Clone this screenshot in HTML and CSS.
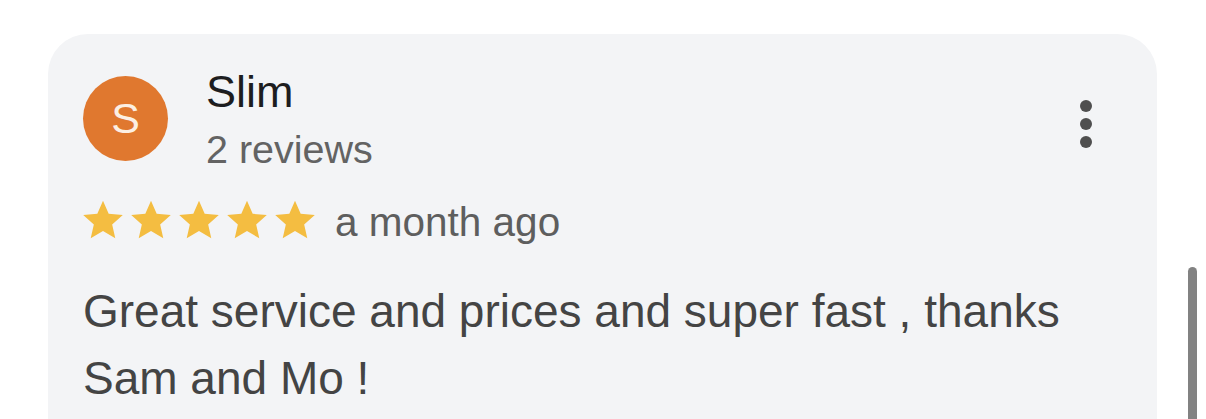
FILE: index.html
```html
<!DOCTYPE html>
<html>
<head>
<meta charset="utf-8">
<link rel="stylesheet" href="styles.css">
</head>
<body>
<div class="page">
  <div class="card">
    <div class="header">
      <div class="avatar">S</div>
      <div class="who">
        <div class="name">Slim</div>
        <div class="count">2 reviews</div>
      </div>
      <div class="menu" aria-label="More options">
        <span class="dot"></span><span class="dot"></span><span class="dot"></span>
      </div>
    </div>
    <div class="meta">
      <div class="stars">
        <svg class="star" viewBox="0 0 24 24"><path d="M12 1.5l3.1 7.1 7.7.7-5.8 5.1 1.7 7.6L12 18l-6.7 4 1.7-7.6-5.8-5.1 7.7-.7z"/></svg>
        <svg class="star" viewBox="0 0 24 24"><path d="M12 1.5l3.1 7.1 7.7.7-5.8 5.1 1.7 7.6L12 18l-6.7 4 1.7-7.6-5.8-5.1 7.7-.7z"/></svg>
        <svg class="star" viewBox="0 0 24 24"><path d="M12 1.5l3.1 7.1 7.7.7-5.8 5.1 1.7 7.6L12 18l-6.7 4 1.7-7.6-5.8-5.1 7.7-.7z"/></svg>
        <svg class="star" viewBox="0 0 24 24"><path d="M12 1.5l3.1 7.1 7.7.7-5.8 5.1 1.7 7.6L12 18l-6.7 4 1.7-7.6-5.8-5.1 7.7-.7z"/></svg>
        <svg class="star" viewBox="0 0 24 24"><path d="M12 1.5l3.1 7.1 7.7.7-5.8 5.1 1.7 7.6L12 18l-6.7 4 1.7-7.6-5.8-5.1 7.7-.7z"/></svg>
      </div>
      <span class="when">a month ago</span>
    </div>
    <p class="text">Great service and prices and super fast , thanks Sam and Mo !</p>
  </div>
  <div class="scrollbar"></div>
</div>
</body>
</html>
```
FILE: styles.css
```css
html, body {
  margin: 0;
  padding: 0;
  background: #ffffff;
  overflow: hidden;
  height: 419px;
}
.page {
  position: relative;
  padding: 34px 49px 0 48px;
  font-family: "Liberation Sans", Arial, sans-serif;
}
.card {
  background: #f3f4f6;
  border-radius: 40px 40px 0 0;
  padding: 42px 47px 0 35px;
  height: 500px;
  box-sizing: border-box;
}
.header {
  display: flex;
  align-items: flex-start;
}
.avatar {
  width: 85px;
  height: 85px;
  border-radius: 50%;
  background: #e0782f;
  color: #fcefe3;
  font-family: "Liberation Sans", Arial, sans-serif;
  font-size: 43px;
  display: flex;
  align-items: center;
  justify-content: center;
  flex: none;
}
.who {
  margin-left: 38px;
  margin-top: -12px;
}
.name {
  font-size: 45px;
  line-height: 56px;
  color: #1d1d1f;
}
.count {
  margin-top: 4px;
  font-size: 39.5px;
  line-height: 50px;
  color: #636363;
}
.menu {
  margin-left: auto;
  width: 48px;
  margin-top: 24px;
  display: flex;
  flex-direction: column;
  align-items: center;
  gap: 6px;
}
.dot {
  width: 12px;
  height: 12px;
  border-radius: 50%;
  background: #4f4f4f;
}
.meta {
  display: flex;
  align-items: flex-start;
  margin-top: 24px;
}
.stars {
  display: flex;
  gap: 4px;
  margin-left: -2px;
}
.star {
  width: 44px;
  height: 44px;
  fill: #f4bd41;
}
.when {
  margin-left: 18px;
  font-size: 40.5px;
  line-height: 49px;
  color: #5e5e5e;
}
.text {
  margin: 31px 0 0 0;
  font-size: 46px;
  line-height: 67px;
  color: #444444;
}
.scrollbar {
  position: absolute;
  left: 1188px;
  top: 267px;
  width: 9px;
  height: 200px;
  border-radius: 5px 5px 0 0;
  background: #828282;
}
```
